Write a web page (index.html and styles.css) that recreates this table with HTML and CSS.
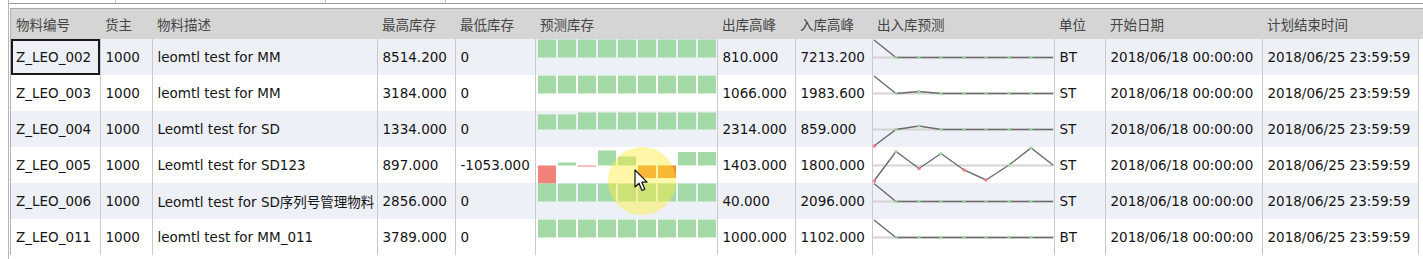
FILE: index.html
```html
<!DOCTYPE html>
<html lang="zh">
<head>
<meta charset="utf-8">
<title>物料库存预测</title>
<link rel="stylesheet" href="styles.css">
</head>
<body>
<div class="frame">
  <div class="topbar"><span class="tb-seg s1"></span><span class="tb-seg s2"></span><span class="tb-seg s3"></span></div>
  <div class="grid-wrap">
    <table class="grid">
      <colgroup>
        <col class="c1"><col class="c2"><col class="c3"><col class="c4"><col class="c5"><col class="c6"><col class="c7"><col class="c8"><col class="c9"><col class="c10"><col class="c11"><col class="c12"><col class="c13">
      </colgroup>
      <thead>
        <tr>
          <th>物料编号</th><th>货主</th><th>物料描述</th><th>最高库存</th><th>最低库存</th><th>预测库存</th><th>出库高峰</th><th>入库高峰</th><th>出入库预测</th><th>单位</th><th>开始日期</th><th>计划结束时间</th><th class="fill"></th>
        </tr>
      </thead>
      <tbody>
        <tr class="alt">
          <td class="focus">Z_LEO_002</td><td>1000</td><td>leomtl test for MM</td><td>8514.200</td><td>0</td>
          <td class="chart"><svg class="bars" width="182" height="36" viewBox="0 0 182 36">
            <rect class="g" x="2" y="0.5" width="18" height="18"/><rect class="g" x="22" y="0.5" width="18" height="18"/><rect class="g" x="42" y="0.5" width="18" height="18"/><rect class="g" x="62" y="0.5" width="18" height="18"/><rect class="g" x="82" y="0.5" width="18" height="18"/><rect class="g" x="102" y="0.5" width="18" height="18"/><rect class="g" x="122" y="0.5" width="18" height="18"/><rect class="g" x="142" y="0.5" width="18" height="18"/><rect class="g" x="162" y="0.5" width="18" height="18"/>
          </svg></td>
          <td>810.000</td><td>7213.200</td>
          <td class="chart"><svg class="spark" width="182" height="36" viewBox="0 0 182 36">
            <line class="base" x1="0" y1="18.5" x2="182" y2="18.5"/>
            <polyline class="ln" points="1,1 23,18.5 46,18.5 68,18.5 91,18.5 113,18.5 136,18.5 158,18.5 180,18.5"/>
            <circle class="dg" cx="23" cy="18.5" r="1.6"/><circle class="dg" cx="46" cy="18.5" r="1.6"/><circle class="dg" cx="68" cy="18.5" r="1.6"/><circle class="dg" cx="91" cy="18.5" r="1.6"/><circle class="dg" cx="113" cy="18.5" r="1.6"/><circle class="dg" cx="136" cy="18.5" r="1.6"/><circle class="dg" cx="158" cy="18.5" r="1.6"/>
          </svg></td>
          <td>BT</td><td>2018/06/18 00:00:00</td><td>2018/06/25 23:59:59</td><td class="fill"></td>
        </tr>
        <tr>
          <td>Z_LEO_003</td><td>1000</td><td>leomtl test for MM</td><td>3184.000</td><td>0</td>
          <td class="chart"><svg class="bars" width="182" height="36" viewBox="0 0 182 36">
            <rect class="g" x="2" y="0.5" width="18" height="18"/><rect class="g" x="22" y="0.5" width="18" height="18"/><rect class="g" x="42" y="0.5" width="18" height="18"/><rect class="g" x="62" y="0.5" width="18" height="18"/><rect class="g" x="82" y="0.5" width="18" height="18"/><rect class="g" x="102" y="0.5" width="18" height="18"/><rect class="g" x="122" y="0.5" width="18" height="18"/><rect class="g" x="142" y="0.5" width="18" height="18"/><rect class="g" x="162" y="0.5" width="18" height="18"/>
          </svg></td>
          <td>1066.000</td><td>1983.600</td>
          <td class="chart"><svg class="spark" width="182" height="36" viewBox="0 0 182 36">
            <line class="base" x1="0" y1="18.5" x2="182" y2="18.5"/>
            <polyline class="ln" points="1,1 23,18.5 46,16.5 68,18.5 91,18.5 113,18.5 136,18.5 158,18.5 180,18.5"/>
            <circle class="dg" cx="23" cy="18.5" r="1.6"/><circle class="dg" cx="46" cy="16.5" r="1.6"/><circle class="dg" cx="68" cy="18.5" r="1.6"/><circle class="dg" cx="91" cy="18.5" r="1.6"/><circle class="dg" cx="113" cy="18.5" r="1.6"/><circle class="dg" cx="136" cy="18.5" r="1.6"/><circle class="dg" cx="158" cy="18.5" r="1.6"/>
          </svg></td>
          <td>ST</td><td>2018/06/18 00:00:00</td><td>2018/06/25 23:59:59</td><td class="fill"></td>
        </tr>
        <tr class="alt">
          <td>Z_LEO_004</td><td>1000</td><td>Leomtl test for SD</td><td>1334.000</td><td>0</td>
          <td class="chart"><svg class="bars" width="182" height="36" viewBox="0 0 182 36">
            <rect class="g" x="2" y="3.5" width="18" height="15"/><rect class="g" x="22" y="3.5" width="18" height="15"/><rect class="g" x="42" y="1.5" width="18" height="17"/><rect class="g" x="62" y="1.5" width="18" height="17"/><rect class="g" x="82" y="1.5" width="18" height="17"/><rect class="g" x="102" y="1.5" width="18" height="17"/><rect class="g" x="122" y="1.5" width="18" height="17"/><rect class="g" x="142" y="1.5" width="18" height="17"/><rect class="g" x="162" y="1.5" width="18" height="17"/>
          </svg></td>
          <td>2314.000</td><td>859.000</td>
          <td class="chart"><svg class="spark" width="182" height="36" viewBox="0 0 182 36">
            <line class="base" x1="0" y1="18.5" x2="182" y2="18.5"/>
            <polyline class="ln" points="1,35 23,18.5 46,15 68,18.5 91,18.5 113,18.5 136,18.5 158,18.5 180,18.5"/>
            <circle class="dr" cx="1.5" cy="35" r="1.8"/><circle class="dg" cx="23" cy="18.5" r="1.6"/><circle class="dg" cx="46" cy="15" r="1.6"/><circle class="dg" cx="68" cy="18.5" r="1.6"/><circle class="dg" cx="91" cy="18.5" r="1.6"/><circle class="dg" cx="113" cy="18.5" r="1.6"/><circle class="dg" cx="136" cy="18.5" r="1.6"/><circle class="dg" cx="158" cy="18.5" r="1.6"/>
          </svg></td>
          <td>ST</td><td>2018/06/18 00:00:00</td><td>2018/06/25 23:59:59</td><td class="fill"></td>
        </tr>
        <tr>
          <td>Z_LEO_005</td><td>1000</td><td>Leomtl test for SD123</td><td>897.000</td><td>-1053.000</td>
          <td class="chart"><svg class="bars" width="182" height="36" viewBox="0 0 182 36">
            <rect class="r" x="2" y="18.5" width="18" height="18"/><rect class="g" x="22" y="15.5" width="18" height="3"/><rect class="r" x="42" y="18.5" width="18" height="1"/><rect class="g" x="62" y="3.5" width="18" height="15"/><rect class="g" x="82" y="9.5" width="18" height="9"/><rect class="o" x="102" y="18.5" width="18" height="12.5"/><rect class="o" x="122" y="18.5" width="18" height="12.5"/><rect class="g" x="142" y="5" width="18" height="13.5"/><rect class="g" x="162" y="5" width="18" height="13.5"/>
          </svg></td>
          <td>1403.000</td><td>1800.000</td>
          <td class="chart"><svg class="spark" width="182" height="36" viewBox="0 0 182 36">
            <line class="base" x1="0" y1="18.5" x2="182" y2="18.5"/>
            <polyline class="ln" points="1,34 23,4.5 46,21.5 68,6.5 91,23 113,33 136,18 158,1 180,18"/>
            <circle class="dr" cx="1.5" cy="34" r="1.8"/><circle class="dg" cx="23" cy="4.5" r="1.6"/><circle class="dr" cx="46" cy="21.5" r="1.8"/><circle class="dg" cx="68" cy="6.5" r="1.6"/><circle class="dr" cx="91" cy="23" r="1.8"/><circle class="dr" cx="113" cy="33" r="1.8"/><circle class="dg" cx="136" cy="18" r="1.6"/><circle class="dg" cx="158" cy="1" r="1.6"/>
          </svg></td>
          <td>ST</td><td>2018/06/18 00:00:00</td><td>2018/06/25 23:59:59</td><td class="fill"></td>
        </tr>
        <tr class="alt">
          <td>Z_LEO_006</td><td>1000</td><td>Leomtl test for SD序列号管理物料</td><td>2856.000</td><td>0</td>
          <td class="chart"><svg class="bars" width="182" height="36" viewBox="0 0 182 36">
            <rect class="g" x="2" y="0.5" width="18" height="18"/><rect class="g" x="22" y="0.5" width="18" height="18"/><rect class="g" x="42" y="0.5" width="18" height="18"/><rect class="g" x="62" y="0.5" width="18" height="18"/><rect class="g" x="82" y="0.5" width="18" height="18"/><rect class="g" x="102" y="0.5" width="18" height="18"/><rect class="g" x="122" y="0.5" width="18" height="18"/><rect class="g" x="142" y="0.5" width="18" height="18"/><rect class="g" x="162" y="0.5" width="18" height="18"/>
          </svg></td>
          <td>40.000</td><td>2096.000</td>
          <td class="chart"><svg class="spark" width="182" height="36" viewBox="0 0 182 36">
            <line class="base" x1="0" y1="18.5" x2="182" y2="18.5"/>
            <polyline class="ln" points="1,0.5 23,18.5 46,18.5 68,18.5 91,18.5 113,18.5 136,18.5 158,18.5 180,18.5"/>
            <circle class="dg" cx="23" cy="18.5" r="1.6"/><circle class="dg" cx="46" cy="18.5" r="1.6"/><circle class="dg" cx="68" cy="18.5" r="1.6"/><circle class="dg" cx="91" cy="18.5" r="1.6"/><circle class="dg" cx="113" cy="18.5" r="1.6"/><circle class="dg" cx="136" cy="18.5" r="1.6"/><circle class="dg" cx="158" cy="18.5" r="1.6"/>
          </svg></td>
          <td>ST</td><td>2018/06/18 00:00:00</td><td>2018/06/25 23:59:59</td><td class="fill"></td>
        </tr>
        <tr>
          <td>Z_LEO_011</td><td>1000</td><td>leomtl test for MM_011</td><td>3789.000</td><td>0</td>
          <td class="chart"><svg class="bars" width="182" height="36" viewBox="0 0 182 36">
            <rect class="g" x="2" y="0.5" width="18" height="18"/><rect class="g" x="22" y="0.5" width="18" height="18"/><rect class="g" x="42" y="0.5" width="18" height="18"/><rect class="g" x="62" y="0.5" width="18" height="18"/><rect class="g" x="82" y="0.5" width="18" height="18"/><rect class="g" x="102" y="0.5" width="18" height="18"/><rect class="g" x="122" y="0.5" width="18" height="18"/><rect class="g" x="142" y="0.5" width="18" height="18"/><rect class="g" x="162" y="0.5" width="18" height="18"/>
          </svg></td>
          <td>1000.000</td><td>1102.000</td>
          <td class="chart"><svg class="spark" width="182" height="36" viewBox="0 0 182 36">
            <line class="base" x1="0" y1="18.5" x2="182" y2="18.5"/>
            <polyline class="ln" points="1,1 23,18.5 46,18.5 68,18.5 91,18.5 113,18.5 136,18.5 158,18.5 180,18.5"/>
            <circle class="dg" cx="23" cy="18.5" r="1.6"/><circle class="dg" cx="46" cy="18.5" r="1.6"/><circle class="dg" cx="68" cy="18.5" r="1.6"/><circle class="dg" cx="91" cy="18.5" r="1.6"/><circle class="dg" cx="113" cy="18.5" r="1.6"/><circle class="dg" cx="136" cy="18.5" r="1.6"/><circle class="dg" cx="158" cy="18.5" r="1.6"/>
          </svg></td>
          <td>BT</td><td>2018/06/18 00:00:00</td><td>2018/06/25 23:59:59</td><td class="fill"></td>
        </tr>
      </tbody>
    </table>
    <div class="click-halo"></div>
    <svg class="cursor" width="16" height="24" viewBox="0 0 16 24">
      <path d="M1 1 L1 18 L5 14.2 L8 21.5 L10.8 20.3 L7.8 13.2 L13 13.2 Z" fill="#fff" stroke="#111" stroke-width="1.2" stroke-linejoin="round"/>
    </svg>
  </div>
</div>
</body>
</html>
```

FILE: styles.css
```css
html, body {
  margin: 0;
  padding: 0;
  background: #ffffff;
}

body {
  width: 1423px;
  height: 259px;
  overflow: hidden;
  font-family: "DejaVu Sans", "Noto Sans CJK SC", sans-serif;
}

.frame {
  margin-left: 8px;
  height: 259px;
  border-left: 1px solid #b4b4b4;
  box-sizing: border-box;
}

.topbar {
  height: 3px;
  border-bottom: 1px solid #9a9a9a;
  display: flex;
}

.tb-seg {
  height: 3px;
  border-right: 1px solid #c8c8c8;
}

.s1 { width: 106px; }
.s2 { width: 209px; }
.s3 { width: 119px; }

.grid-wrap {
  position: relative;
  margin-top: 4px;
  margin-left: 1px;
  border-left: 1px solid #b0b0b0;
}

.grid {
  border-collapse: collapse;
  table-layout: fixed;
  width: 1413px;
  font-size: 13.5px;
  color: #151515;
}

.c1 { width: 89px; }
.c2 { width: 52px; }
.c3 { width: 225px; }
.c4 { width: 78px; }
.c5 { width: 80px; }
.c6 { width: 182px; }
.c7 { width: 78px; }
.c8 { width: 77px; }
.c9 { width: 182px; }
.c10 { width: 51px; }
.c11 { width: 157px; }
.c12 { width: 156px; }
.c13 { width: 6px; }

.grid th {
  height: 30px;
  padding: 1px 0 0 5px;
  background: #d5d5d5;
  border-top: 1px solid #a8a8a8;
  color: #454545;
  font-family: "Noto Sans CJK SC", "DejaVu Sans", sans-serif;
  font-weight: normal;
  font-size: 13.5px;
  text-align: left;
  white-space: nowrap;
  overflow: hidden;
  box-sizing: border-box;
}

.grid td {
  height: 36px;
  padding: 0 0 0 5px;
  border-right: 1px solid #cacaca;
  white-space: nowrap;
  overflow: hidden;
  box-sizing: border-box;
  vertical-align: middle;
}

.grid tbody tr {
  background: #ffffff;
}

.grid tbody tr.alt {
  background: #edf0f6;
}

.grid td.fill {
  border-right: none;
  background: #ffffff;
}

.grid td.focus {
  outline: 2px solid #1a1a1a;
  outline-offset: -2px;
}

.grid td.chart {
  padding: 0;
  overflow: visible;
  vertical-align: top;
}

.bars, .spark {
  display: block;
  overflow: visible;
}

.bars .g { fill: #a2d9a6; }
.bars .r { fill: #f2817a; }
.bars .o { fill: #f28a2e; }

.spark .base {
  stroke: #d4d4d4;
  stroke-width: 2;
}

.spark .ln {
  fill: none;
  stroke: #6b6b6b;
  stroke-width: 1.4;
}

.spark .dg { fill: #9fd89f; }
.spark .dr { fill: #f07f86; }

.click-halo {
  position: absolute;
  left: 597px;
  top: 139px;
  width: 68px;
  height: 68px;
  border-radius: 50%;
  background: rgba(255, 238, 60, 0.45);
  pointer-events: none;
}

.cursor {
  position: absolute;
  left: 623px;
  top: 161px;
  pointer-events: none;
}
```
